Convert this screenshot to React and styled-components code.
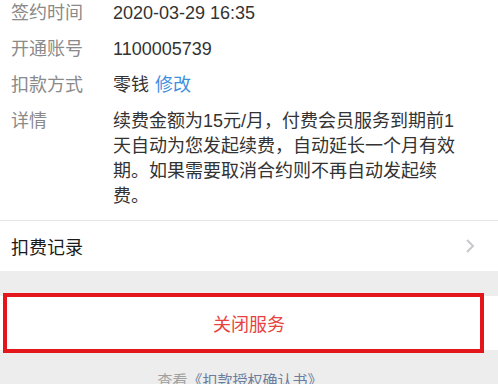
import React from 'react';
import styled, { createGlobalStyle } from 'styled-components';

const GlobalStyle = createGlobalStyle`
  body {
    margin: 0;
    background: #ededed;
    font-family: "Liberation Sans", "Noto Sans CJK SC", sans-serif;
  }
`;

const Page = styled.div`
  width: 498px;
  height: 384px;
  overflow: hidden;
  background: #ededed;
`;

const InfoSection = styled.section`
  background: #fff;
  padding: 1px 0 11px;
  display: flex;
  flex-direction: column;
  gap: 11px;
`;

const InfoRow = styled.div`
  display: flex;
  font-size: 18px;
  line-height: 25px;
`;

const Label = styled.div`
  width: 102px;
  padding-left: 11px;
  flex-shrink: 0;
  color: #8a8a8a;
`;

const Value = styled.div`
  width: 352px;
  color: #333;
`;

const Link = styled.span`
  color: #3f8fde;
  margin-left: 6px;
`;

const RecordRow = styled.div`
  height: 50px;
  background: #fff;
  border-top: 1px solid #e6e6e6;
  display: flex;
  align-items: center;
  justify-content: space-between;
  padding: 0 23px 0 11px;
  font-size: 18px;
  color: #1a1a1a;
`;

const Spacer = styled.div`
  height: 25px;
`;

const CloseButton = styled.div`
  position: relative;
  height: 54px;
  background: #fff;
  display: flex;
  align-items: center;
  justify-content: center;
  font-size: 18px;
  color: #e64340;
`;

const Highlight = styled.div`
  position: absolute;
  top: -3px;
  left: 3px;
  width: 481px;
  height: 60px;
  box-sizing: border-box;
  border: 4px solid #e3161b;
`;

const Footer = styled.div`
  padding: 21px 18px 0 0;
  text-align: center;
  font-size: 15px;
  line-height: 20px;
  color: #a0a0a0;
`;

const FooterLink = styled.span`
  color: #6d7d9c;
`;

function Chevron() {
  return (
    <svg width="10" height="16" viewBox="0 0 10 16">
      <polyline points="2,2 8,8 2,14" fill="none" stroke="#c7c7cc" strokeWidth="2" />
    </svg>
  );
}

export default function App() {
  return (
    <Page>
      <GlobalStyle />
      <InfoSection>
        <InfoRow>
          <Label>签约时间</Label>
          <Value>2020-03-29 16:35</Value>
        </InfoRow>
        <InfoRow>
          <Label>开通账号</Label>
          <Value>1100005739</Value>
        </InfoRow>
        <InfoRow>
          <Label>扣款方式</Label>
          <Value>
            零钱<Link>修改</Link>
          </Value>
        </InfoRow>
        <InfoRow>
          <Label>详情</Label>
          <Value>
            续费金额为15元/月，付费会员服务到期前1天自动为您发起续费，自动延长一个月有效期。如果需要取消合约则不再自动发起续费。
          </Value>
        </InfoRow>
      </InfoSection>
      <RecordRow>
        扣费记录
        <Chevron />
      </RecordRow>
      <Spacer />
      <CloseButton>
        关闭服务
        <Highlight />
      </CloseButton>
      <Footer>
        查看<FooterLink>《扣款授权确认书》</FooterLink>
      </Footer>
    </Page>
  );
}
